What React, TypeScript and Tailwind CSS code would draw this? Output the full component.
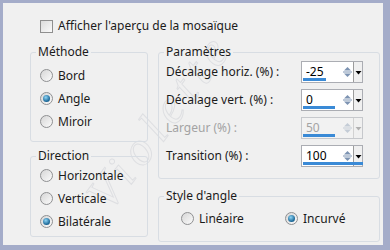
import type { ReactNode } from "react";

// ---------------------------------------------------------------------------
// Small Windows-style controls
// ---------------------------------------------------------------------------

function Radio({ checked, label }: { checked?: boolean; label: string }) {
  return (
    <div className="flex items-center gap-[5px]">
      <span className="flex size-[13px] items-center justify-center rounded-full border border-[#8f9092] bg-[linear-gradient(135deg,#d6d6d6,#fbfbfb)]">
        {checked && (
          <span className="size-[7px] rounded-full bg-[radial-gradient(circle_at_40%_35%,#8fd6f6,#1e6a9a_65%,#124a70)]" />
        )}
      </span>
      <span>{label}</span>
    </div>
  );
}

function Group({
  title,
  className,
  children,
}: {
  title: string;
  className: string;
  children: ReactNode;
}) {
  return (
    <fieldset className={`rounded-[3px] border border-[#d8dde3] p-0 ${className}`}>
      <legend className="ml-[5px] px-[2px] leading-[16px]">{title}</legend>
      {children}
    </fieldset>
  );
}

function Spin({
  value,
  bar,
  disabled,
}: {
  value: string;
  bar: number;
  disabled?: boolean;
}) {
  const arrow = disabled ? "#c4ccd6" : "#7d93b2";
  return (
    <div
      className={`relative flex h-[22px] w-[62px] items-center border ${
        disabled ? "border-[#c6c8cc] bg-[#f2f2f2] text-[#a3a3a3]" : "border-[#abadb3] bg-white text-black"
      }`}
    >
      <span className="ml-[4px] flex-1 leading-none">{value}</span>
      <div className="mr-[1px] flex h-[16px] w-[9px] flex-col items-center justify-center">
        <svg width="9" height="16" viewBox="0 0 9 16">
          <path d="M4.5 3 L8 6.5 H1 Z" fill={arrow} />
          <line x1="0" y1="8" x2="9" y2="8" stroke={arrow} strokeWidth="1" />
          <path d="M4.5 13 L8 9.5 H1 Z" fill={arrow} />
        </svg>
      </div>
      <div
        className={`flex h-[20px] w-[9px] items-center justify-center border-l ${
          disabled ? "border-[#d2d2d2] bg-[#f0f0f0]" : "border-[#9c9c9c] bg-[#f0f0f0]"
        }`}
      >
        <svg width="7" height="5" viewBox="0 0 7 5">
          <path d="M0.5 1 H6.5 L3.5 4.5 Z" fill={disabled ? "#b0b0b0" : "#000"} />
        </svg>
      </div>
      <div
        className="absolute bottom-[1px] left-[1px] h-[3px] bg-[#3a8ad6]"
        style={{ width: bar }}
      />
    </div>
  );
}

function ParamRow({
  label,
  value,
  bar,
  disabled,
}: {
  label: string;
  value: string;
  bar: number;
  disabled?: boolean;
}) {
  return (
    <div className="flex h-[28px] items-center justify-between">
      <span className={disabled ? "text-[#a3a3a3]" : ""}>{label}</span>
      <Spin value={value} bar={bar} disabled={disabled} />
    </div>
  );
}

// ---------------------------------------------------------------------------
// Page
// ---------------------------------------------------------------------------

export default function App() {
  return (
    <div className="relative h-[250px] w-[390px] overflow-hidden border-b-[5px] border-l-[3px] border-r-[7px] border-t-[3px] border-[#a4acc9] bg-[#f0f0f0] font-['Noto_Sans',sans-serif] text-[12px] text-[#1b1b1b]">
      {/* watermark */}
      <div className="pointer-events-none absolute left-[52px] top-[93px] -rotate-[53deg] font-['Liberation_Serif',serif] text-[48px] italic leading-none tracking-[8px] text-transparent [-webkit-text-stroke:1px_#dedfe2]">
        Violette
      </div>

      {/* checkbox */}
      <div className="relative ml-[37px] mt-[14px] flex items-center gap-[5px]">
        <span className="size-[13px] border border-[#8f8f8f] bg-[linear-gradient(135deg,#dcdcdc,#fafafa)]" />
        <span>Afficher l'aperçu de la mosaïque</span>
      </div>

      <div className="relative ml-[27px] mt-[9px] flex gap-[10px]">
        {/* left column */}
        <div className="flex w-[118px] flex-col gap-[6px]">
          <Group title="Méthode" className="h-[98px]">
            <div className="flex flex-col pl-[9px] pt-[4px]">
              <div className="flex h-[23px] items-center">
                <Radio label="Bord" />
              </div>
              <div className="flex h-[23px] items-center">
                <Radio checked label="Angle" />
              </div>
              <div className="flex h-[23px] items-center">
                <Radio label="Miroir" />
              </div>
            </div>
          </Group>
          <Group title="Direction" className="h-[89px]">
            <div className="flex flex-col pl-[9px]">
              <div className="flex h-[23px] items-center">
                <Radio label="Horizontale" />
              </div>
              <div className="flex h-[23px] items-center">
                <Radio label="Verticale" />
              </div>
              <div className="flex h-[23px] items-center">
                <Radio checked label="Bilatérale" />
              </div>
            </div>
          </Group>
        </div>

        {/* right column */}
        <div className="flex w-[222px] flex-col gap-[9px]">
          <Group title="Paramètres" className="h-[135px]">
            <div className="-mt-[2px] flex flex-col pl-[7px] pr-[16px]">
              <ParamRow label="Décalage horiz. (%) :" value="-25" bar={23} />
              <ParamRow label="Décalage vert. (%) :" value="0" bar={32} />
              <ParamRow label="Largeur (%) :" value="50" bar={32} disabled />
              <ParamRow label="Transition (%) :" value="100" bar={60} />
            </div>
          </Group>
          <Group title="Style d'angle" className="h-[54px]">
            <div className="flex pl-[22px] pt-[3px]">
              <div className="flex h-[23px] w-[104px] items-center">
                <Radio label="Linéaire" />
              </div>
              <div className="flex h-[23px] items-center">
                <Radio checked label="Incurvé" />
              </div>
            </div>
          </Group>
        </div>
      </div>
    </div>
  );
}
